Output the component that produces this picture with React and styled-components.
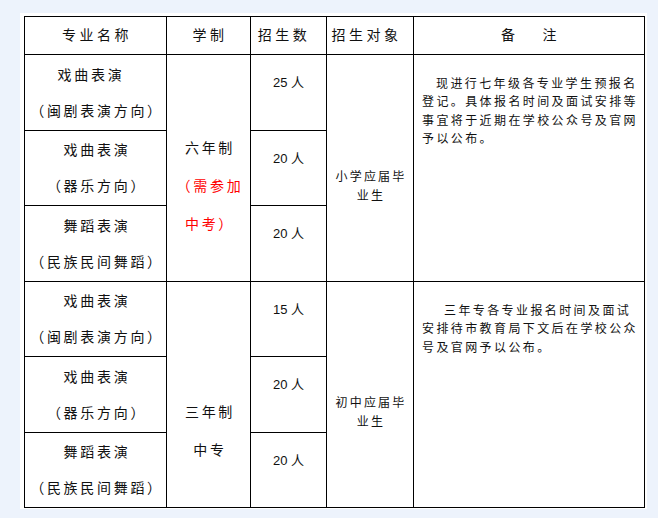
import React from "react";
import styled, { createGlobalStyle } from "styled-components";

const Global = createGlobalStyle`
  html, body { margin: 0; padding: 0; }
  body {
    background: #edf3fc;
    font-family: "Noto Sans CJK SC", "Liberation Sans", sans-serif;
    color: #111;
  }
`;

const Viewport = styled.div`
  padding: 13px 0 0 20px;
  width: 658px;
  height: 518px;
  box-sizing: border-box;
`;

const Page = styled.div`
  background: #fff;
  width: 627px;
  height: 496px;
  box-sizing: border-box;
  padding: 3px 0 0 4px;
`;

const Table = styled.table`
  border-collapse: collapse;
  table-layout: fixed;
  width: 620px;
  td, th { border: 1px solid #000; padding: 0; box-sizing: border-box; }
`;

const HeadRow = styled.tr`
  height: 38px;
`;

const BodyRow = styled.tr`
  height: ${(p) => p.$h}px;
`;

const HeadCell = styled.th`
  font-weight: normal;
  font-size: 14px;
  letter-spacing: 3.5px;
  text-align: center;
  vertical-align: middle;
  padding-left: 3px !important;
  padding-right: ${(p) => p.$pr ?? 0}px !important;
  padding-bottom: 3px !important;
`;

const NameCell = styled.td`
  font-size: 14px;
  letter-spacing: 2.7px;
  line-height: 36px;
  text-align: center;
  vertical-align: middle;
  padding-left: 3px !important;
  padding-bottom: 2px !important;
`;

const Line = styled.div`
  white-space: nowrap;
  padding-right: ${(p) => p.$pr ?? 0}px;
`;

const SystemCell = styled.td`
  font-size: 14px;
  letter-spacing: 2.7px;
  line-height: 38px;
  text-align: center;
  vertical-align: top;
  padding-top: ${(p) => p.$pt}px !important;
  padding-left: 3px !important;
`;

const Red = styled.div`
  color: #ff0000;
  white-space: nowrap;
`;

const CountCell = styled.td`
  font-family: "Liberation Sans", "Noto Sans CJK SC", sans-serif;
  font-size: 13px;
  text-align: center;
  vertical-align: middle;
  padding-bottom: 22px !important;
`;

const TargetCell = styled.td`
  font-size: 12px;
  letter-spacing: 2.2px;
  line-height: 19px;
  text-align: center;
  vertical-align: top;
  padding-top: ${(p) => p.$pt}px !important;
  padding-left: 2px !important;
`;

const NoteCell = styled.td`
  font-size: 12px;
  letter-spacing: 2.4px;
  line-height: 18.3px;
  text-align: left;
  vertical-align: top;
  padding: 19px 6px 0 8px !important;
`;

const NoteLine = styled.div`
  white-space: nowrap;
  padding-left: ${(p) => p.$indent ?? 0}px;
`;

const Count = ({ n }) => <CountCell>{n} 人</CountCell>;

export default function App() {
  return (
    <>
      <Global />
      <Viewport>
        <Page>
          <Table>
            <colgroup>
              <col style={{ width: 142 }} />
              <col style={{ width: 84 }} />
              <col style={{ width: 76 }} />
              <col style={{ width: 87 }} />
              <col style={{ width: 231 }} />
            </colgroup>
            <tbody>
              <HeadRow>
                <HeadCell>专业名称</HeadCell>
                <HeadCell>学制</HeadCell>
                <HeadCell $pr={12}>招生数</HeadCell>
                <HeadCell $pr={10}>招生对象</HeadCell>
                <HeadCell>备　 注</HeadCell>
              </HeadRow>

              <BodyRow $h={76}>
                <NameCell>
                  <Line $pr={12}>戏曲表演</Line>
                  <Line>（闽剧表演方向）</Line>
                </NameCell>
                <SystemCell rowSpan={3} $pt={73}>
                  <Line>六年制</Line>
                  <Red>（需参加</Red>
                  <Red>中考）</Red>
                </SystemCell>
                <Count n="25" />
                <TargetCell rowSpan={3} $pt={111}>
                  <Line>小学应届毕</Line>
                  <Line>业生</Line>
                </TargetCell>
                <NoteCell rowSpan={3}>
                  <NoteLine $indent={14}>现进行七年级各专业学生预报名</NoteLine>
                  <NoteLine>登记。具体报名时间及面试安排等</NoteLine>
                  <NoteLine>事宜将于近期在学校公众号及官网</NoteLine>
                  <NoteLine>予以公布。</NoteLine>
                </NoteCell>
              </BodyRow>
              <BodyRow $h={75}>
                <NameCell>
                  <Line>戏曲表演</Line>
                  <Line>（器乐方向）</Line>
                </NameCell>
                <Count n="20" />
              </BodyRow>
              <BodyRow $h={76}>
                <NameCell>
                  <Line>舞蹈表演</Line>
                  <Line>（民族民间舞蹈）</Line>
                </NameCell>
                <Count n="20" />
              </BodyRow>

              <BodyRow $h={75}>
                <NameCell>
                  <Line>戏曲表演</Line>
                  <Line>（闽剧表演方向）</Line>
                </NameCell>
                <SystemCell rowSpan={3} $pt={110}>
                  <Line>三年制</Line>
                  <Line>中专</Line>
                </SystemCell>
                <Count n="15" />
                <TargetCell rowSpan={3} $pt={110}>
                  <Line>初中应届毕</Line>
                  <Line>业生</Line>
                </TargetCell>
                <NoteCell rowSpan={3}>
                  <NoteLine $indent={22}>三年专各专业报名时间及面试</NoteLine>
                  <NoteLine>安排待市教育局下文后在学校公众</NoteLine>
                  <NoteLine>号及官网予以公布。</NoteLine>
                </NoteCell>
              </BodyRow>
              <BodyRow $h={76}>
                <NameCell>
                  <Line>戏曲表演</Line>
                  <Line>（器乐方向）</Line>
                </NameCell>
                <Count n="20" />
              </BodyRow>
              <BodyRow $h={75}>
                <NameCell>
                  <Line>舞蹈表演</Line>
                  <Line>（民族民间舞蹈）</Line>
                </NameCell>
                <Count n="20" />
              </BodyRow>
            </tbody>
          </Table>
        </Page>
      </Viewport>
    </>
  );
}
